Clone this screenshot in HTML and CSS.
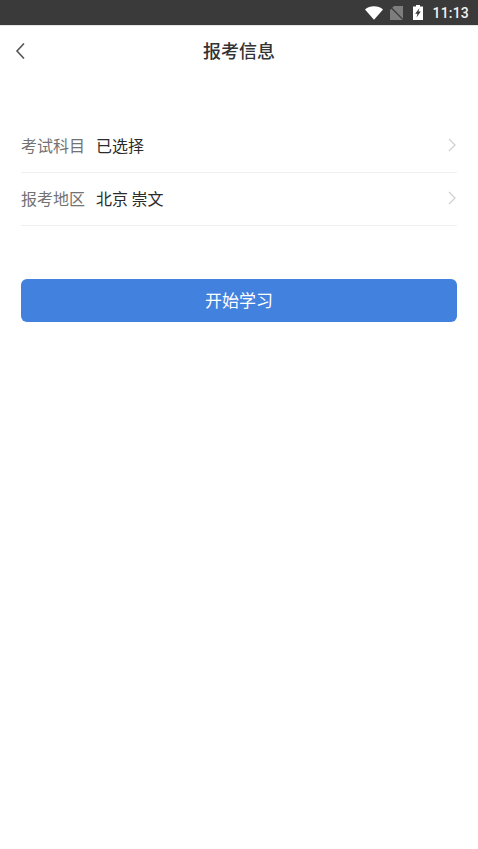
FILE: index.html
```html
<!DOCTYPE html>
<html lang="zh-CN">

<head>
    <meta charset="UTF-8">
    <meta name="viewport" content="width=device-width, initial-scale=1.0">
    <title>报考信息</title>
    <link rel="stylesheet" href="styles.css">
</head>

<body>
    <!-- 状态栏 -->
    <div class="status-bar">
        <svg class="icon-wifi" width="18" height="14" viewBox="0 0 19 14">
            <path d="M0 3.200C2.600 1.200 5.800 0 9.500 0s6.900 1.200 9.500 3.200L9.500 14z" fill="#fff"/>
        </svg>
        <svg class="icon-sim" width="13" height="14" viewBox="0 0 13 14">
            <path d="M4 0h9v14H0V4z" fill="#7d7d7d"/>
            <path d="M1 1.500l12 12" stroke="#3a3a3a" stroke-width="1.200"/>
        </svg>
        <svg class="icon-battery" width="10" height="15" viewBox="0 0 10 15">
            <path d="M3 0h4v1.500h3V15H0V1.500h3z" fill="#fff"/>
            <path d="M6.500 3L2.200 8.800h2.300l-1 3.700 4.300-6h-2.300z" fill="#3a3a3a"/>
        </svg>
        <span class="time">11:13</span>
    </div>

    <!-- 标题栏 -->
    <header class="title-bar">
        <svg class="back" width="10" height="16" viewBox="0 0 10 16">
            <path d="M9 .5L2 8l7 7.500" fill="none" stroke="#555" stroke-width="1.600"/>
        </svg>
        <h1>报考信息</h1>
    </header>

    <main>
        <div class="row">
            <span class="label">考试科目</span>
            <span class="value">已选择</span>
            <svg class="arrow" width="8" height="14" viewBox="0 0 8 14">
                <path d="M1 1l6 6-6 6" fill="none" stroke="#cfcfcf" stroke-width="1.200"/>
            </svg>
        </div>
        <div class="row">
            <span class="label">报考地区</span>
            <span class="value">北京 崇文</span>
            <svg class="arrow" width="8" height="14" viewBox="0 0 8 14">
                <path d="M1 1l6 6-6 6" fill="none" stroke="#cfcfcf" stroke-width="1.200"/>
            </svg>
        </div>
        <button class="start-btn">开始学习</button>
    </main>
</body>

</html>
```

FILE: styles.css
```css
body {
    font-family: "Noto Sans CJK SC", "Liberation Sans", sans-serif;
    margin: 0;
    padding: 0;
    background-color: #fff;
}

.status-bar {
    display: flex;
    align-items: center;
    justify-content: flex-end;
    height: 25px;
    padding-right: 9px;
    background-color: #3a3a3a;
    border-bottom: 1px solid #e6e6e6;
}

.icon-wifi {
    margin-right: 7px;
}

.icon-sim {
    margin-right: 10px;
}

.icon-battery {
    margin-right: 9px;
}

.time {
    font-family: Roboto, sans-serif;
    font-size: 14px;
    font-weight: 500;
    letter-spacing: 0.200px;
    color: #f2f2f2;
}

.title-bar {
    position: relative;
    display: flex;
    align-items: center;
    justify-content: center;
    box-sizing: border-box;
    height: 50px;
    padding-bottom: 3px;
}

.title-bar h1 {
    margin: 0;
    font-size: 18px;
    font-weight: 500;
    color: #333;
}

.back {
    position: absolute;
    left: 15px;
    top: 17px;
}

main {
    display: flex;
    flex-direction: column;
    padding: 44px 21px 0;
}

.row {
    display: flex;
    align-items: center;
    box-sizing: border-box;
    height: 53px;
    padding-bottom: 3px;
    border-bottom: 1px solid #efefef;
    font-size: 16px;
}

.label {
    width: 75px;
    color: #737373;
}

.value {
    flex: 1;
    color: #2b2b2b;
}

.arrow {
    margin-right: 1px;
}

.start-btn {
    height: 43px;
    margin-top: 53px;
    padding-bottom: 3px;
    border: none;
    border-radius: 6px;
    background-color: #4281dd;
    color: #fff;
    font-family: inherit;
    font-size: 17px;
}
```
